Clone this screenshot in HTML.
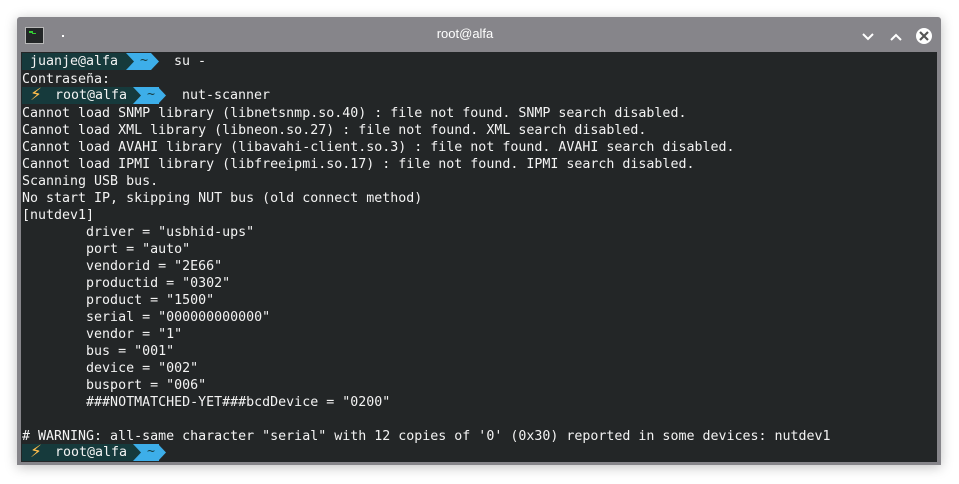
<!DOCTYPE html>
<html><head><meta charset="utf-8"><style>
body{margin:0;width:959px;height:484px;background:#fff;overflow:hidden;position:relative;font-family:"Liberation Sans",sans-serif}
.win{position:absolute;left:17px;top:17px;width:924px;height:448px;background:#86858a;border-radius:3px 3px 0 0;box-shadow:0 2px 12px rgba(0,0,0,.25)}
.term{position:absolute;left:21px;top:52px;width:916px;height:410px;background:#232627}
.t{position:absolute;left:22px;top:54px;font-family:"DejaVu Sans Mono",monospace;font-size:13.3px;line-height:17px;color:#f3f3f3;white-space:pre}
.t div{height:17px}
.p{position:absolute;height:17px;font-family:"DejaVu Sans Mono",monospace;font-size:13.3px;line-height:17px;color:#f3f3f3;white-space:pre}
.teal{position:absolute;height:17px;background:#163a3c}
.blue{position:absolute;height:17px;background:#3daee9}
.bolt{position:absolute;color:#fdbc4b;font-size:17px;line-height:17px;font-family:"DejaVu Sans",sans-serif}
</style></head><body>
<div class="win"></div>
<div style="position:absolute;left:25px;top:27px;width:19px;height:17px;background:#232627;border:1px solid #b8b8b8;box-sizing:border-box"><div style="position:absolute;left:3px;top:3px;width:4px;height:2px;background:#3c3"></div><div style="position:absolute;left:6px;top:5px;width:4px;height:1px;background:#3c3"></div></div>
<div style="position:absolute;left:62px;top:35px;width:2px;height:2px;background:#fff"></div>
<div style="position:absolute;left:0;width:930px;top:26px;text-align:center;color:#fff;font-size:13px">root@alfa</div>
<svg style="position:absolute;left:860px;top:28px" width="80" height="20"><path d="M3 6 L8 11 L13 6" stroke="#fff" stroke-width="2" fill="none"/><path d="M31 12 L36 7 L41 12" stroke="#fff" stroke-width="2" fill="none"/><circle cx="64" cy="8" r="8" fill="#fff"/><path d="M60 4 L68 12 M68 4 L60 12" stroke="#555" stroke-width="2.2"/></svg>
<div class="term"></div>

<div class="teal" style="left:22px;top:53px;width:106px"></div>
<div class="blue" style="left:126px;top:53px;width:25px"></div>
<svg style="position:absolute;left:126px;top:53px" width="34" height="17"><polygon points="0,0 8,8.5 0,17" fill="#163a3c"/><polygon points="25,0 33,8.5 25,17" fill="#3daee9"/></svg>
<div class="p" style="left:30px;top:53px">juanje@alfa</div>
<div class="p" style="left:140px;top:52px;color:#163a3c">~</div>
<div class="p" style="left:174px;top:53px">su -</div>

<div class="teal" style="left:22px;top:87px;width:112px"></div>
<div class="blue" style="left:133px;top:87px;width:26px"></div>
<svg style="position:absolute;left:133px;top:87px" width="34" height="17"><polygon points="0,0 8,8.5 0,17" fill="#163a3c"/><polygon points="25,0 33,8.5 25,17" fill="#3daee9"/></svg>
<div class="bolt" style="left:30px;top:87px">⚡</div>
<div class="p" style="left:55px;top:87px">root@alfa</div>
<div class="p" style="left:147px;top:86px;color:#163a3c">~</div>
<div class="p" style="left:182px;top:87px">nut-scanner</div>

<div class="teal" style="left:22px;top:444px;width:112px"></div>
<div class="blue" style="left:133px;top:444px;width:26px"></div>
<svg style="position:absolute;left:133px;top:444px" width="34" height="17"><polygon points="0,0 8,8.5 0,17" fill="#163a3c"/><polygon points="25,0 33,8.5 25,17" fill="#3daee9"/></svg>
<div class="bolt" style="left:30px;top:444px">⚡</div>
<div class="p" style="left:55px;top:444px">root@alfa</div>
<div class="p" style="left:147px;top:443px;color:#163a3c">~</div>

<div class="t"><div> </div><div>Contraseña:</div><div> </div><div>Cannot load SNMP library (libnetsnmp.so.40) : file not found. SNMP search disabled.</div><div>Cannot load XML library (libneon.so.27) : file not found. XML search disabled.</div><div>Cannot load AVAHI library (libavahi-client.so.3) : file not found. AVAHI search disabled.</div><div>Cannot load IPMI library (libfreeipmi.so.17) : file not found. IPMI search disabled.</div><div>Scanning USB bus.</div><div>No start IP, skipping NUT bus (old connect method)</div><div>[nutdev1]</div><div>        driver = "usbhid-ups"</div><div>        port = "auto"</div><div>        vendorid = "2E66"</div><div>        productid = "0302"</div><div>        product = "1500"</div><div>        serial = "000000000000"</div><div>        vendor = "1"</div><div>        bus = "001"</div><div>        device = "002"</div><div>        busport = "006"</div><div>        ###NOTMATCHED-YET###bcdDevice = "0200"</div><div> </div><div># WARNING: all-same character "serial" with 12 copies of '0' (0x30) reported in some devices: nutdev1</div></div>
</body></html>
